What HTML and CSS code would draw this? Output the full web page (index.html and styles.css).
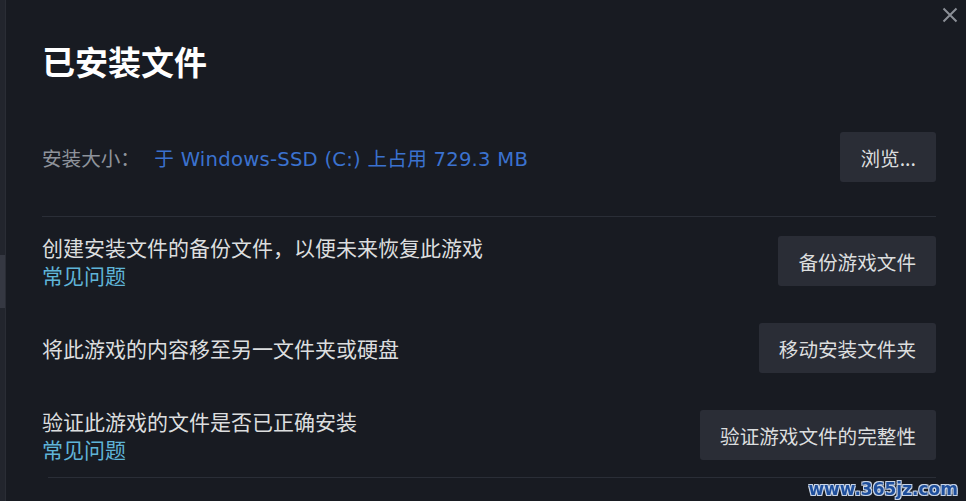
FILE: index.html
```html
<!DOCTYPE html>
<html lang="zh-CN">
<head>
    <meta charset="UTF-8" />
    <meta name="viewport" content="width=device-width, initial-scale=1.0" />
    <title>已安装文件</title>
    <link rel="stylesheet" href="styles.css">
</head>
<body>
    <div class="page">
      <!-- left edge of the settings sidebar -->
      <div class="side-edge">
        <div class="side-thumb"></div>
      </div>

      <div class="panel">
        <button class="close-btn" aria-label="关闭">
          <svg width="16" height="16" viewBox="0 0 16 16">
            <path d="M1.5 1.5 L14.5 14.5 M14.5 1.5 L1.5 14.5" stroke="#8b8f97" stroke-width="2" fill="none" />
          </svg>
        </button>

        <h1 class="title">已安装文件</h1>

        <div class="size-row">
          <div class="size-info">
            <span class="size-label">安装大小：</span>
            <span class="size-value">于 Windows-SSD (C:) 上占用 729.3 MB</span>
          </div>
          <button class="btn">浏览...</button>
        </div>

        <div class="options">
          <div class="option">
            <div class="option-text">
              <p>创建安装文件的备份文件，以便未来恢复此游戏</p>
              <a href="#" class="faq">常见问题</a>
            </div>
            <button class="btn">备份游戏文件</button>
          </div>
          <div class="option">
            <div class="option-text">
              <p>将此游戏的内容移至另一文件夹或硬盘</p>
            </div>
            <button class="btn">移动安装文件夹</button>
          </div>
          <div class="option">
            <div class="option-text">
              <p>验证此游戏的文件是否已正确安装</p>
              <a href="#" class="faq">常见问题</a>
            </div>
            <button class="btn">验证游戏文件的完整性</button>
          </div>
        </div>
      </div>
    </div>

    <div class="watermark">www.365jz.com</div>
</body>
</html>
```

FILE: styles.css
```css
* {
  margin: 0;
  padding: 0;
  box-sizing: border-box;
}

body {
  font-family: "Noto Sans CJK SC", "Noto Sans", sans-serif;
  background-color: #181b22;
  color: #dcdedf;
  height: 100vh;
  overflow: hidden;
}

.page {
  display: flex;
  height: 100vh;
}

/* Sidebar edge on the left */
.side-edge {
  width: 6px;
  background: #22252d;
  border-right: 1px solid #2a2d35;
  padding-top: 255px;
}

.side-thumb {
  height: 53px;
  background: #353842;
}

.panel {
  flex: 1;
  position: relative;
  padding: 40px 30px 0 36px;
}

.close-btn {
  position: absolute;
  top: 7px;
  right: 8px;
  background: none;
  border: none;
  cursor: pointer;
  line-height: 0;
}

.title {
  font-size: 33px;
  font-weight: 700;
  color: #ffffff;
  line-height: 42px;
}

/* Install size row */
.size-row {
  display: flex;
  align-items: center;
  justify-content: space-between;
  margin-top: 50px;
  padding-bottom: 34px;
  border-bottom: 1px solid #2a2e37;
}

.size-info {
  font-size: 19.6px;
}

.size-label {
  color: #8e939b;
  margin-right: 10px;
}

.size-value {
  font-family: "DejaVu Sans", "Noto Sans CJK SC", sans-serif;
  color: #3b72cf;
  letter-spacing: 0.25px;
}

.btn {
  font-family: "Noto Sans CJK SC", "Noto Sans", sans-serif;
  font-size: 19.6px;
  color: #dcdedf;
  background: #2a2d36;
  border: none;
  border-radius: 3px;
  height: 50px;
  padding: 0 20px;
  cursor: pointer;
  white-space: nowrap;
}

.btn:hover {
  background: #343843;
}

/* Option rows */
.options {
  display: flex;
  flex-direction: column;
  gap: 34px;
  padding: 16px 0 14px;
  border-bottom: 1px solid #2a2e37;
  margin-left: 6px;
}

.option {
  display: flex;
  align-items: center;
  justify-content: space-between;
  margin-left: -6px;
}

.option-text {
  font-size: 21px;
  line-height: 28px;
}

.faq {
  color: #5fb4d8;
  text-decoration: none;
}

.watermark {
  position: fixed;
  right: 8px;
  bottom: 2px;
  font-family: "DejaVu Sans", sans-serif;
  font-weight: 700;
  font-size: 17px;
  color: #1f4f9c;
  text-shadow: 1px 1px 0 #c8d4e6, -1px -1px 0 #c8d4e6, 1px -1px 0 #c8d4e6, -1px 1px 0 #c8d4e6;
}
```
